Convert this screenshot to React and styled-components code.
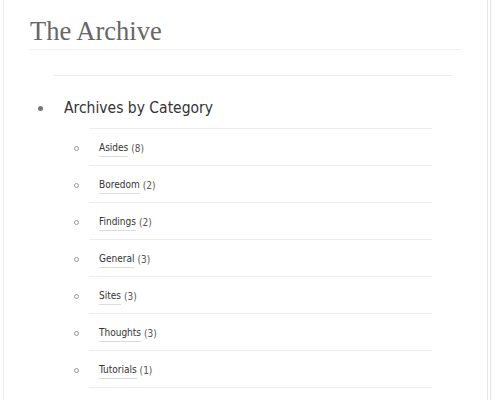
import React from "react";
import styled, { createGlobalStyle } from "styled-components";

const GlobalStyle = createGlobalStyle`
  html, body { margin: 0; padding: 0; background: #fff; }
  body { width: 500px; height: 400px; overflow: hidden; }
`;

const Outer = styled.div`
  width: 491px;
  height: 400px;
  border-right: 1px solid #e6e6e6;
  box-sizing: border-box;
`;

const Page = styled.div`
  margin-left: 3px;
  width: 485px;
  height: 400px;
  border-left: 1px solid #ececec;
  border-right: 1px solid #e6e6e6;
  box-sizing: border-box;
  padding: 14px 25px 0 26px;
`;

const Title = styled.h1`
  margin: 0;
  font-family: "Liberation Serif", "Times New Roman", serif;
  font-weight: normal;
  font-size: 26.5px;
  line-height: 34px;
  color: #666;
  padding-bottom: 1px;
  border-bottom: 1px solid #f0f0f0;
`;

const Divider = styled.div`
  margin: 25px 10px 0 24px;
  border-top: 1px solid #ebebeb;
`;

const Category = styled.div`
  display: flex;
  flex-direction: column;
  margin-top: 22px;
`;

const HeadRow = styled.div`
  display: flex;
  align-items: center;
  height: 20px;
`;

const MarkerBox = styled.div`
  width: ${(p) => p.$w}px;
  flex: none;
  display: flex;
  align-items: center;
  padding-left: ${(p) => p.$pl}px;
  padding-top: ${(p) => p.$pt || 0}px;
  box-sizing: border-box;
`;

const Disc = styled.span`
  width: 5px;
  height: 5px;
  border-radius: 50%;
  background: #777;
`;

const Ring = styled.span`
  width: 3px;
  height: 3px;
  border-radius: 50%;
  border: 1px solid #999;
`;

const HeadText = styled.h2`
  margin: 0 0 0 10px;
  font-family: "DejaVu Sans Condensed", "DejaVu Sans", sans-serif;
  font-stretch: condensed;
  font-weight: normal;
  font-size: 15.5px;
  line-height: 20px;
  color: #333;
`;

const SubList = styled.ul`
  list-style: none;
  margin: 10px 30px 0 24px;
  padding: 0;
  display: flex;
  flex-direction: column;
`;

const SubTop = styled.li`
  margin-left: 35px;
  border-top: 1px solid #ececec;
`;

const SubRow = styled.li`
  display: flex;
  align-items: stretch;
  height: 37px;
`;

const SubLine = styled.div`
  flex: 1;
  display: flex;
  align-items: center;
  border-bottom: 1px solid #ececec;
  padding: 3px 0 0 10px;
  font-family: "DejaVu Sans Condensed", "DejaVu Sans", sans-serif;
  font-stretch: condensed;
  font-size: 10px;
  line-height: 14px;
  color: #555;
`;

const Link = styled.a`
  color: #333;
  text-decoration: none;
  padding-bottom: 1px;
  border-bottom: 1px solid #dcdcdc;
  margin-right: 3px;
`;

const items = [
  ["Asides", 8],
  ["Boredom", 2],
  ["Findings", 2],
  ["General", 3],
  ["Sites", 3],
  ["Thoughts", 3],
  ["Tutorials", 1],
];

export default function App() {
  return (
    <Outer>
      <GlobalStyle />
      <Page>
        <Title>The Archive</Title>
        <Divider />
        <Category>
          <HeadRow>
            <MarkerBox $w={24} $pl={8}>
              <Disc />
            </MarkerBox>
            <HeadText>Archives by Category</HeadText>
          </HeadRow>
          <SubList>
            <SubTop />
            {items.map(([name, n]) => (
              <SubRow key={name}>
                <MarkerBox $w={35} $pl={20} $pt={1}>
                  <Ring />
                </MarkerBox>
                <SubLine>
                  <Link href="#">{name}</Link>({n})
                </SubLine>
              </SubRow>
            ))}
          </SubList>
        </Category>
      </Page>
    </Outer>
  );
}
